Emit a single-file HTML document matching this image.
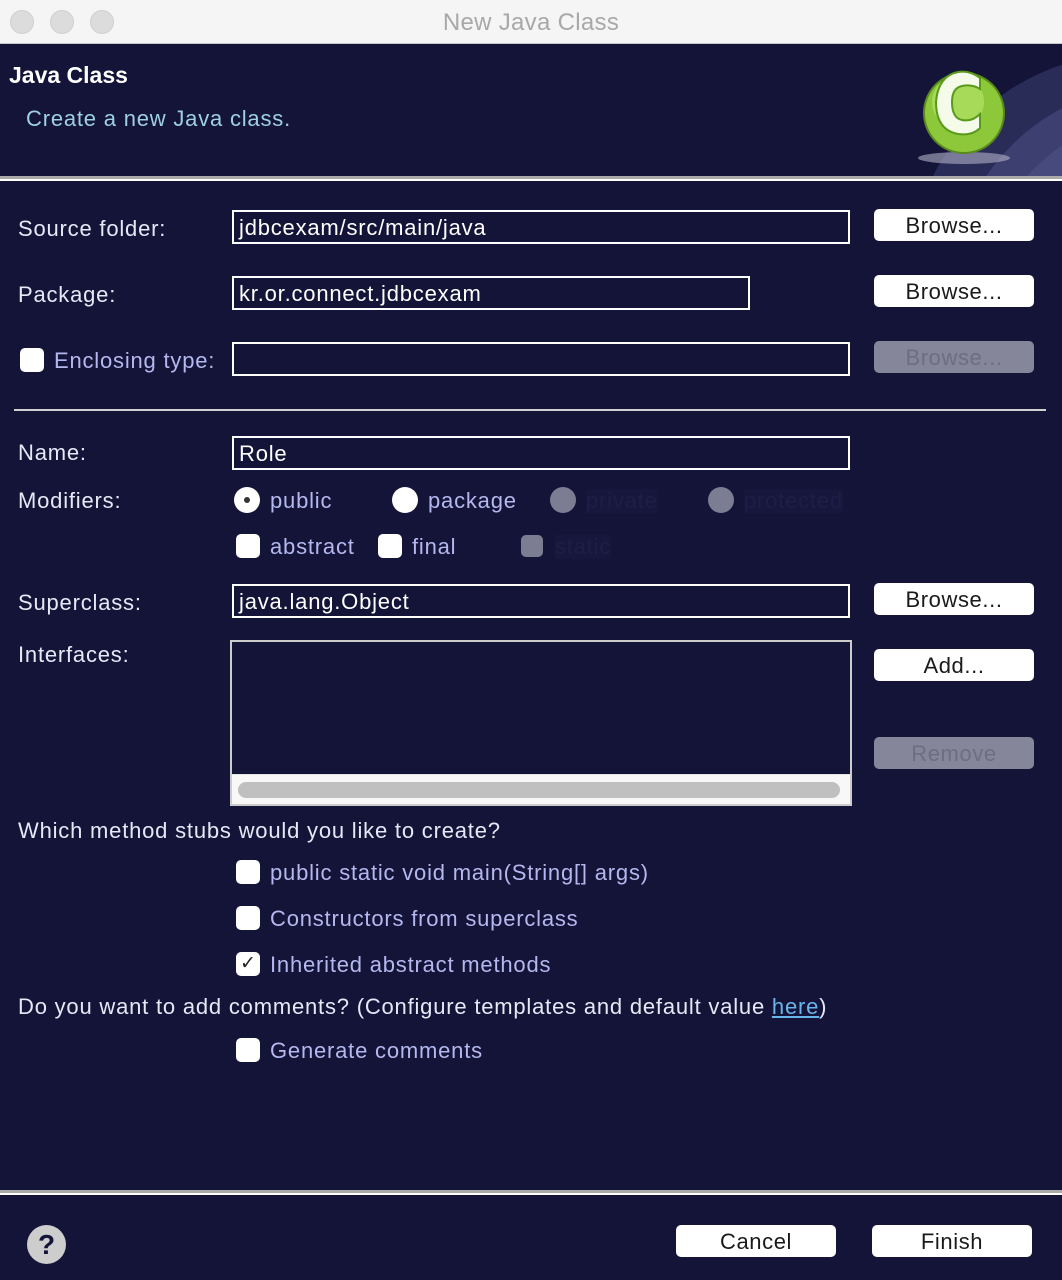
<!DOCTYPE html>
<html><head><meta charset="utf-8"><style>
*{margin:0;padding:0;box-sizing:border-box}
body{width:1062px;height:1280px;background:#141438;font-family:"Liberation Sans",sans-serif;position:relative;overflow:hidden}
.a{position:absolute}
.t{position:absolute;font-size:22px;letter-spacing:.8px;line-height:24px;white-space:nowrap}
.lbl{color:#e6e8f6}
.lav{color:#b4b8ee}
.inp{position:absolute;border:2px solid #fff;color:#fff;font-size:22px;letter-spacing:.8px;line-height:32px;padding-left:5px;white-space:nowrap}
.btn{position:absolute;background:#fff;border-radius:5px;color:#1a1a1a;font-size:22px;letter-spacing:.6px;line-height:34px;text-align:center;width:160px;height:32px}
.btn.d{background:#86869a;color:#6e6e82}
.cb{position:absolute;width:24px;height:24px;background:#fff;border-radius:5px}
.cb.d{background:#7c7c92}
.rb{position:absolute;width:26px;height:26px;background:#fff;border-radius:50%}
.rb.d{background:#7c7c92}
.dim{color:#1d1d46;background:#17173d}
</style></head><body>
<div class="a" style="left:0;top:0;width:1062px;height:44px;background:#f5f5f5;border-bottom:1px solid #c8c8c8"></div>
<div class="a" style="left:10px;top:10px;width:24px;height:24px;border-radius:50%;background:#dcdcdc;border:1px solid #d0d0d0"></div>
<div class="a" style="left:50px;top:10px;width:24px;height:24px;border-radius:50%;background:#dcdcdc;border:1px solid #d0d0d0"></div>
<div class="a" style="left:90px;top:10px;width:24px;height:24px;border-radius:50%;background:#dcdcdc;border:1px solid #d0d0d0"></div>
<div class="t" style="left:0;width:1062px;text-align:center;top:11px;color:#a8a8a8;font-size:24px;letter-spacing:.3px">New Java Class</div>
<svg class="a" style="left:900px;top:44px" width="162" height="132">
<circle cx="230" cy="230" r="220" fill="#2a2c58"/>
<circle cx="260" cy="250" r="210" fill="#3c3f70"/>
<circle cx="290" cy="280" r="220" fill="#474a7c"/>
<ellipse cx="64" cy="114" rx="46" ry="6" fill="#b0b0c8" opacity=".6"/>
<circle cx="64" cy="69" r="40" fill="#8cc83a" stroke="#5a8a1a" stroke-width="2"/>
<circle cx="58" cy="58" r="26" fill="#c4ec7a" opacity=".5"/>
<path d="M80 45 L80 34 Q70 26 58 28 Q38 32 36 58 Q36 86 58 90 Q72 92 80 84 L80 70 Q72 78 62 76 Q52 74 52 58 Q52 44 62 42 Q72 40 80 45 Z" fill="#f4fbe8" stroke="#5a9a1a" stroke-width="2"/>
</svg>
<div class="t" style="left:9px;top:63px;color:#fff;font-weight:bold;font-size:23px;letter-spacing:0">Java Class</div>
<div class="t" style="left:26px;top:107px;color:#9ed0e0">Create a new Java class.</div>
<div class="a" style="left:0;top:176px;width:1062px;height:3px;background:#aaa"></div>
<div class="a" style="left:0;top:179px;width:1062px;height:2px;background:#fff"></div>
<div class="t lbl" style="left:18px;top:217px">Source folder:</div>
<div class="inp" style="left:232px;top:210px;width:618px;height:34px">jdbcexam/src/main/java</div>
<div class="btn" style="left:874px;top:209px">Browse...</div>
<div class="t lbl" style="left:18px;top:283px">Package:</div>
<div class="inp" style="left:232px;top:276px;width:518px;height:34px">kr.or.connect.jdbcexam</div>
<div class="btn" style="left:874px;top:275px">Browse...</div>
<div class="cb" style="left:20px;top:348px"></div>
<div class="t lav" style="left:54px;top:349px">Enclosing type:</div>
<div class="inp" style="left:232px;top:342px;width:618px;height:34px"></div>
<div class="btn d" style="left:874px;top:341px">Browse...</div>
<div class="a" style="left:14px;top:409px;width:1032px;height:2px;background:#d0d0d0"></div>
<div class="t lbl" style="left:18px;top:441px">Name:</div>
<div class="inp" style="left:232px;top:436px;width:618px;height:34px">Role</div>
<div class="t lbl" style="left:18px;top:489px">Modifiers:</div>
<div class="rb" style="left:234px;top:487px"></div><div class="a" style="left:244px;top:497px;width:6px;height:6px;border-radius:50%;background:#333"></div>
<div class="t lav" style="left:270px;top:489px">public</div>
<div class="rb" style="left:392px;top:487px"></div>
<div class="t lav" style="left:428px;top:489px">package</div>
<div class="rb d" style="left:550px;top:487px"></div>
<div class="t dim" style="left:586px;top:489px">private</div>
<div class="rb d" style="left:708px;top:487px"></div>
<div class="t dim" style="left:744px;top:489px">protected</div>
<div class="cb" style="left:236px;top:534px"></div>
<div class="t lav" style="left:270px;top:535px">abstract</div>
<div class="cb" style="left:378px;top:534px"></div>
<div class="t lav" style="left:412px;top:535px">final</div>
<div class="cb d" style="left:521px;top:535px;width:22px;height:22px"></div>
<div class="t dim" style="left:555px;top:535px">static</div>
<div class="t lbl" style="left:18px;top:591px">Superclass:</div>
<div class="inp" style="left:232px;top:584px;width:618px;height:34px">java.lang.Object</div>
<div class="btn" style="left:874px;top:583px">Browse...</div>
<div class="t lbl" style="left:18px;top:643px">Interfaces:</div>
<div class="a" style="left:230px;top:640px;width:622px;height:166px;border:2px solid #ccc;background:#141438"></div>
<div class="a" style="left:232px;top:774px;width:618px;height:30px;background:#f8f8f8;border-top:1px solid #e4e4e4"></div>
<div class="a" style="left:238px;top:782px;width:602px;height:16px;border-radius:8px;background:#c0c0c0"></div>
<div class="btn" style="left:874px;top:649px">Add...</div>
<div class="btn d" style="left:874px;top:737px">Remove</div>
<div class="t lbl" style="left:18px;top:819px">Which method stubs would you like to create?</div>
<div class="cb" style="left:236px;top:860px"></div>
<div class="t lav" style="left:270px;top:861px">public static void main(String[] args)</div>
<div class="cb" style="left:236px;top:906px"></div>
<div class="t lav" style="left:270px;top:907px">Constructors from superclass</div>
<div class="cb" style="left:236px;top:952px"></div>
<div class="t" style="left:240px;top:952px;color:#222;font-size:19px">✓</div>
<div class="t lav" style="left:270px;top:953px">Inherited abstract methods</div>
<div class="t lbl" style="left:18px;top:995px">Do you want to add comments? (Configure templates and default value <span style="color:#6ab4ec;text-decoration:underline">here</span>)</div>
<div class="cb" style="left:236px;top:1038px"></div>
<div class="t lav" style="left:270px;top:1039px">Generate comments</div>
<div class="a" style="left:0;top:1190px;width:1062px;height:3px;background:#aaa"></div>
<div class="a" style="left:0;top:1193px;width:1062px;height:2px;background:#fff"></div>
<div class="a" style="left:27px;top:1225px;width:39px;height:39px;border-radius:50%;background:#cdcdcd;color:#141438;font-weight:bold;font-size:28px;line-height:39px;text-align:center">?</div>
<div class="btn" style="left:676px;top:1225px">Cancel</div>
<div class="btn" style="left:872px;top:1225px">Finish</div>
</body></html>
